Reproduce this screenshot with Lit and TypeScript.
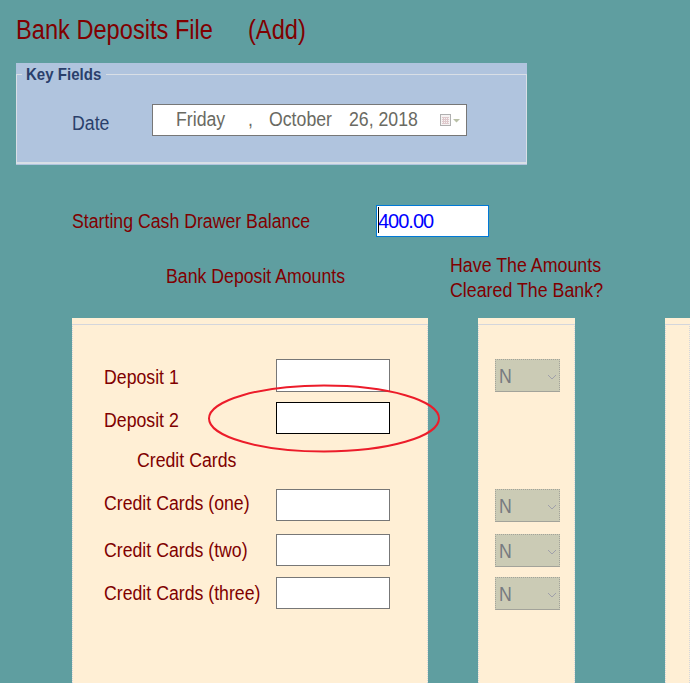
import { LitElement, html, css, svg } from "lit";
import { customElement } from "lit/decorators.js";

type Row = { label?: string; indent?: boolean; input?: boolean; select?: boolean; mark?: boolean };
const ROWS: Row[] = [
  { label: "Deposit 1", input: true, select: true },
  { label: "Deposit 2", input: true, mark: true },
  { label: "Credit Cards", indent: true },
  { label: "Credit Cards (one)", input: true, select: true },
  { label: "Credit Cards (two)", input: true, select: true },
  { label: "Credit Cards (three)", input: true, select: true },
];

@customElement("app-root")
export class AppRoot extends LitElement {
  static styles = css`
    :host {
      display: block;
      position: relative;
      width: 690px;
      height: 683px;
      overflow: hidden;
      background: #5f9ea0;
      color: #800000;
      font: 20px/25px "Liberation Sans", Arial, sans-serif;
    }
    .t {
      display: inline-block;
      white-space: nowrap;
      transform: scaleX(0.885);
      transform-origin: left center;
    }
    h1 {
      margin: 0;
      padding: 16px 0 0 16px;
      height: 28px;
      font-size: 27px;
      font-weight: 400;
      line-height: 28px;
      display: flex;
    }
    h1 span:first-child { width: 232px; }
    h1 .t { transform: scaleX(0.875); }
    .key {
      margin: 19px 0 0 16px;
      width: 511px;
      height: 102px;
      background: #b0c4de;
      box-sizing: border-box;
      padding-top: 1px;
    }
    fieldset {
      margin: 0;
      padding: 0;
      height: 100px;
      box-sizing: border-box;
      border: 0 solid #d9dfe6;
      border-width: 1px 1px 2px 1px;
      color: #2a3f6b;
    }
    legend {
      margin-left: 5px;
      padding: 0 0 0 4px;
      width: 84px;
      box-sizing: border-box;
      font-size: 17px;
      font-weight: 700;
      line-height: 20px;
    }
    legend .t { transform: translateY(1px) scaleX(0.885); }
    .date-row {
      display: flex;
      margin-top: 20px;
      padding-left: 55px;
    }
    .date-row > label {
      width: 80px;
      padding-top: 7px;
    }
    .date {
      width: 315px;
      height: 32px;
      box-sizing: border-box;
      border: 1px solid #777;
      background: #fff;
      color: #6a6a62;
      display: flex;
      align-items: center;
      padding: 0 0 2px 23px;
    }
    .date .t:nth-child(1) { width: 72px; }
    .date .t:nth-child(2) { width: 21px; }
    .date .t:nth-child(3) { width: 80px; }
    .date .t:nth-child(4) { width: 91px; }
    .date svg { margin: 4px 0 0 0; flex: none; }
    .balance {
      display: flex;
      margin-top: 40px;
      padding-left: 72px;
      height: 32px;
      align-items: center;
    }
    .balance > label { width: 304px; }
    .caret-wrap { position: relative; display: block; height: 32px; }
    .caret-wrap::after {
      content: "";
      position: absolute;
      left: 2px;
      top: 2px;
      width: 1px;
      height: 26px;
      background: #000;
    }
    .cash {
      width: 113px;
      height: 32px;
      box-sizing: border-box;
      border: 1px solid #0078d7;
      background: #fff;
      color: #0000ff;
      font: inherit;
      letter-spacing: -1px;
      padding: 0 0 0 1px;
      margin: 0;
      outline: none;
      display: block;
    }
    .heads {
      display: grid;
      grid-template-columns: 284px auto;
      margin-top: 16px;
      padding-left: 166px;
      height: 65px;
    }
    .heads div:first-child { padding-top: 11px; }
    .heads div:last-child .t { transform: scaleX(0.89); }
    .panels {
      display: flex;
      padding-left: 72px;
      height: 365px;
    }
    .panel {
      background: #ffefd5;
      padding-top: 6px;
      box-sizing: border-box;
      height: 100%;
    }
    .panel > div {
      border-top: 1px solid #d4d6dc;
      border-left: 1px dotted #d4d6dc;
      border-right: 1px dotted #d4d6dc;
      height: 100%;
      box-sizing: border-box;
      padding-top: 34px;
    }
    .p1 { width: 356px; }
    .p1 .row { padding-left: 31px; }
    .p2 { width: 97px; margin-left: 50px; }
    .p2 .row { padding-left: 16px; }
    .p3 { flex: 1; margin-left: 90px; }
    .row { display: flex; height: 32px; }
    .row > label { width: 172px; flex: none; }
    .r0 { height: 33px; }
    .r1 { margin-top: 10px; }
    .r2 { margin-top: 14px; height: 24px; }
    .r3 { margin-top: 17px; }
    .r4 { margin-top: 13px; }
    .r5 { margin-top: 11px; }
    .r0 > label { padding-top: 6px; }
    .r1 > label { padding-top: 6px; }
    .r3 > label { padding-top: 2px; }
    .r4 > label { padding-top: 4px; }
    .r5 > label { padding-top: 4px; }
    .indent { padding-left: 33px; box-sizing: border-box; }
    .field {
      width: 114px;
      height: 100%;
      box-sizing: border-box;
      border: 1px solid #777;
      background: #fff;
      margin: 0;
      padding: 0;
      display: block;
      outline: none;
    }
    .field.marked { border-color: #000; }
    .select {
      width: 65px;
      height: 33px;
      box-sizing: border-box;
      border: 1px dotted #a3a39a;
      border-bottom-style: solid;
      background: #cbcbb5;
      color: #777a80;
      display: flex;
      align-items: center;
      justify-content: space-between;
      padding: 2px 2px 0 3px;
    }
    .ring {
      position: absolute;
      left: 205px;
      top: 382px;
      pointer-events: none;
    }
  `;

  private calendar() {
    return svg`<svg width="21" height="14" viewBox="0 0 21 14">
      <rect x="0.500" y="0.500" width="10" height="11" fill="#f6f3f3" stroke="#b0b0b0"/>
      <path d="M2 3.500h7M2 5.500h7M2 7.500h7M2 9.500h7M3.500 3v7M5.500 3v7M7.500 3v7" stroke="#dfc9cc" stroke-width="1"/>
      <path d="M13 5h7l-3.500 3.500z" fill="#b9c0a6"/>
    </svg>`;
  }

  private chevron() {
    return svg`<svg width="10" height="6" viewBox="0 0 10 6"><path d="M1 1l4 4 4-4" fill="none" stroke="#a0a0aa" stroke-width="1"/></svg>`;
  }

  render() {
    return html`
      <h1><span><span class="t">Bank Deposits File</span></span><span><span class="t">(Add)</span></span></h1>
      <div class="key">
        <fieldset>
          <legend><span class="t">Key Fields</span></legend>
          <div class="date-row">
            <label><span class="t">Date</span></label>
            <div class="date">
              <span class="t">Friday</span><span class="t">,</span><span class="t">October</span><span class="t">26, 2018</span>
              ${this.calendar()}
            </div>
          </div>
        </fieldset>
      </div>
      <div class="balance">
        <label><span class="t">Starting Cash Drawer Balance</span></label>
        <span class="caret-wrap"><input class="cash" .value=${"400.00"} /></span>
      </div>
      <div class="heads">
        <div><span class="t">Bank Deposit Amounts</span></div>
        <div><span class="t">Have The Amounts<br />Cleared The Bank?</span></div>
      </div>
      <div class="panels">
        <div class="panel p1"><div>
          ${ROWS.map(
            (r, i) => html`<div class="row r${i}">
              <label class=${r.indent ? "indent" : ""}><span class="t">${r.label}</span></label>
              ${r.input ? html`<input class="field ${r.mark ? "marked" : ""}" />` : ""}
            </div>`
          )}
        </div></div>
        <div class="panel p2"><div>
          ${ROWS.map(
            (r, i) => html`<div class="row r${i}">
              ${r.select ? html`<div class="select"><span class="t">N</span>${this.chevron()}</div>` : ""}
            </div>`
          )}
        </div></div>
        <div class="panel p3"><div></div></div>
      </div>
      <svg class="ring" width="238" height="74" viewBox="0 0 238 74">
        <ellipse cx="119" cy="36.500" rx="115" ry="33" fill="none" stroke="#ec1c2a" stroke-width="2"/>
      </svg>
    `;
  }
}
